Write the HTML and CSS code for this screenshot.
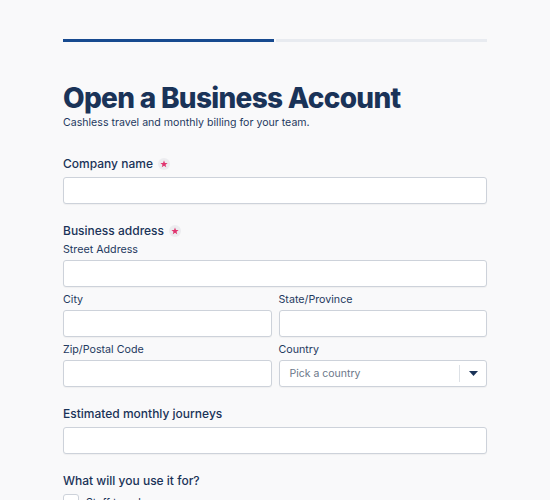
FILE: index.html
```html
<!DOCTYPE html>
<html lang="en">
  <head>
    <meta charset="UTF-8" />
    <meta name="viewport" content="width=device-width, initial-scale=1.0" />
    <title>Open a Business Account</title>
    <link rel="stylesheet" href="styles.css">
  </head>
  <body>
    <div class="form-wrapper">
      <div class="progress">
        <div class="progress-step active"></div>
        <div class="progress-step"></div>
      </div>

      <h1 class="form-title">Open a Business Account</h1>
      <p class="form-subtitle">Cashless travel and monthly billing for your team.</p>

      <div class="field">
        <label class="field-label">Company name
          <span class="required">
            <svg width="8" height="8" viewBox="0 0 10 10">
              <path d="M5 0.5 L6.2 3.6 L9.5 3.7 L6.9 5.8 L7.8 9.2 L5 7.3 L2.2 9.2 L3.1 5.8 L0.5 3.7 L3.8 3.6 Z" fill="#e0356f" />
            </svg>
          </span>
        </label>
        <input class="input" type="text" />
      </div>

      <div class="field">
        <div class="field-label group-label">Business address
          <span class="required">
            <svg width="8" height="8" viewBox="0 0 10 10">
              <path d="M5 0.5 L6.2 3.6 L9.5 3.7 L6.9 5.8 L7.8 9.2 L5 7.3 L2.2 9.2 L3.1 5.8 L0.5 3.7 L3.8 3.6 Z" fill="#e0356f" />
            </svg>
          </span>
        </div>
        <div class="address-group">
          <div class="sub-field">
            <label class="sub-label">Street Address</label>
            <input class="input" type="text" />
          </div>
          <div class="row">
            <div class="sub-field">
              <label class="sub-label">City</label>
              <input class="input" type="text" />
            </div>
            <div class="sub-field">
              <label class="sub-label">State/Province</label>
              <input class="input" type="text" />
            </div>
          </div>
          <div class="row">
            <div class="sub-field">
              <label class="sub-label">Zip/Postal Code</label>
              <input class="input" type="text" />
            </div>
            <div class="sub-field">
              <label class="sub-label">Country</label>
              <div class="select">
                <span class="select-placeholder">Pick a country</span>
                <span class="select-divider"></span>
                <svg class="select-caret" width="9" height="5" viewBox="0 0 9 5">
                  <path d="M0 0 L9 0 L4.5 5 Z" fill="#1a3358" />
                </svg>
              </div>
            </div>
          </div>
        </div>
      </div>

      <div class="field">
        <label class="field-label">Estimated monthly journeys</label>
        <input class="input" type="text" />
      </div>

      <div class="field">
        <div class="field-label">What will you use it for?</div>
        <label class="checkbox-item">
          <span class="checkbox"></span>
          <span>Staff travel</span>
        </label>
      </div>
    </div>
  </body>
</html>
```

FILE: styles.css
```css
body {
  margin: 0;
  padding: 0;
  background-color: #f9f9fa;
  font-family: Inter, "Noto Sans", sans-serif;
  color: #1a3358;
}

.form-wrapper {
  width: 424px;
  margin: 0 auto;
  padding-top: 39px;
}

.progress {
  display: flex;
  gap: 2px;
}

.progress-step {
  flex: 1;
  height: 3px;
  background: #e8ebf0;
}

.progress-step.active {
  background: #174a8f;
}

.form-title {
  margin: 39px 0 0;
  font-size: 28px;
  font-weight: 800;
  line-height: 34px;
  letter-spacing: -0.7px;
  color: #1a3358;
}

.form-subtitle {
  margin: 0 0 26px;
  padding-top: 2px;
  font-size: 10.6px;
  line-height: 12px;
  color: #1f3a5f;
}

.field {
  margin-bottom: 18px;
}

.field-label {
  display: flex;
  align-items: center;
  gap: 5px;
  margin-bottom: 6px;
  padding-top: 2px;
  font-size: 12px;
  font-weight: 500;
  line-height: 14px;
  color: #1a3358;
}

.group-label {
  margin-bottom: 4px;
}

.required {
  display: flex;
  align-items: center;
  justify-content: center;
  width: 12px;
  height: 12px;
  border-radius: 50%;
  background: #ececef;
}

.address-group {
  display: flex;
  flex-direction: column;
  gap: 5px;
}

.sub-field {
  flex: 1;
  min-width: 0;
}

.sub-label {
  display: block;
  margin-bottom: 4px;
  padding-top: 2px;
  font-size: 10.7px;
  line-height: 12px;
  color: #1f3a5f;
}

.row {
  display: flex;
  gap: 7px;
}

.input {
  display: block;
  box-sizing: border-box;
  width: 100%;
  height: 27px;
  margin: 0;
  border: 1px solid #cdd2da;
  border-radius: 3px;
  background: white;
  box-shadow: 0 1px 1px rgba(0, 0, 0, 0.04);
}

.select {
  display: flex;
  align-items: center;
  box-sizing: border-box;
  height: 27px;
  padding: 0 8px 0 10px;
  border: 1px solid #cdd2da;
  border-radius: 3px;
  background: white;
  box-shadow: 0 1px 1px rgba(0, 0, 0, 0.04);
}

.select-placeholder {
  flex: 1;
  font-size: 10.5px;
  color: #6b7789;
}

.select-divider {
  width: 1px;
  height: 17px;
  margin-right: 9px;
  background: #dde1e6;
}

.checkbox-item {
  display: flex;
  align-items: center;
  gap: 7px;
  font-size: 10.7px;
}

.checkbox {
  width: 14px;
  height: 14px;
  border: 1px solid #cdd2da;
  border-radius: 3px;
  background: white;
}
```
